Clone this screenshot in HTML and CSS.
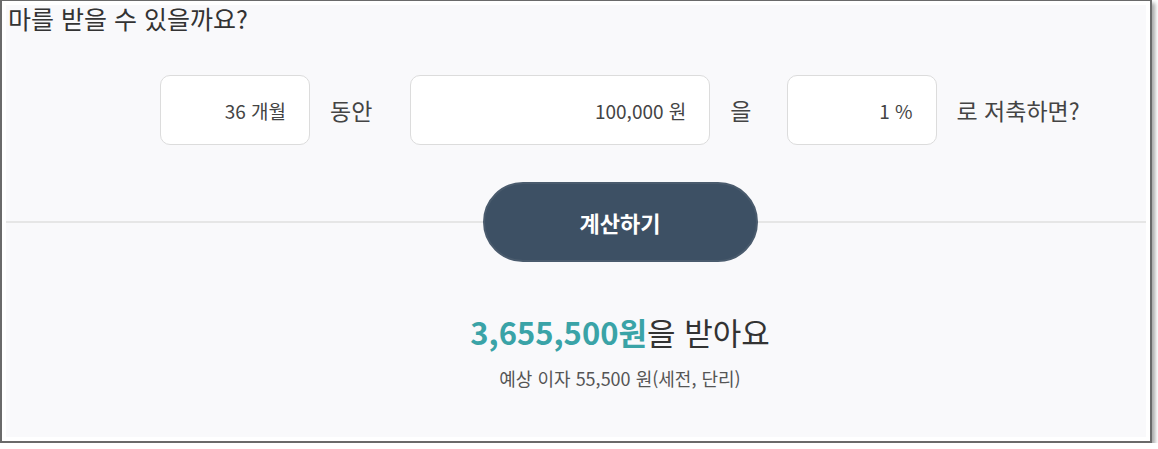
FILE: index.html
```html
<!DOCTYPE html>
<html lang="ko">
<head>
<meta charset="utf-8">
<link rel="stylesheet" href="styles.css">
</head>
<body>
<div class="frame">
  <div class="page">
    <h1 class="title">마를 받을 수 있을까요?</h1>
    <div class="row">
      <div class="field field-sm">36 개월</div>
      <span class="label">동안</span>
      <div class="field field-lg">100,000 원</div>
      <span class="label label-short">을</span>
      <div class="field field-sm">1 %</div>
      <span class="label label-last">로 저축하면?</span>
    </div>
    <div class="btn-row">
      <button class="btn">계산하기</button>
    </div>
    <div class="result">
      <p class="result-main"><strong class="amount">3,655,500원</strong>을 받아요</p>
      <p class="result-sub">예상 이자 55,500 원(세전, 단리)</p>
    </div>
  </div>
</div>
</body>
</html>
```

FILE: styles.css
```css
* { box-sizing: border-box; }

html, body {
  margin: 0;
  padding: 0;
  background: #ffffff;
}

body {
  font-family: "Noto Sans CJK KR", "Noto Sans", sans-serif;
  color: #333333;
}

.frame {
  width: 1152px;
  height: 443px;
  background: #ffffff;
  border: 2px solid #6a6a6a;
  border-top-width: 1px;
  padding: 4px;
  box-shadow: 3px 3px 4px rgba(0, 0, 0, 0.35);
}

.page {
  height: 100%;
  background: #f9f9fb;
}

.title {
  margin: 0;
  padding-left: 2px;
  font-size: 25px;
  line-height: 26px;
  font-weight: 400;
  color: #333333;
}

.row {
  display: flex;
  align-items: center;
  margin: 44px 0 0 154px;
  height: 70px;
}

.field {
  height: 70px;
  background: #ffffff;
  border: 1px solid #dcdcdc;
  border-radius: 10px;
  display: flex;
  align-items: center;
  justify-content: flex-end;
  padding-right: 23px;
  font-size: 19px;
  color: #444444;
  font-weight: 400;
}

.field-sm { width: 150px; }
.field-lg { width: 300px; }

.label {
  margin: 0 38px 0 20px;
  font-size: 23px;
  color: #444444;
}

.label-short { margin-right: 35px; }

.label-last { margin-right: 0; }

.btn-row {
  margin-top: 37px;
  display: flex;
  justify-content: center;
  padding: 0 66px 0 154px;
  background: linear-gradient(#e6e6e6, #e6e6e6) no-repeat center / 100% 2px;
}

.btn {
  width: 275px;
  height: 80px;
  border-radius: 40px;
  background: #3d5064;
  border: 2px solid #4a5b6d;
  color: #ffffff;
  font-family: inherit;
  font-size: 22px;
  font-weight: 700;
  padding: 0;
}

.result {
  padding: 0 66px 0 154px;
  text-align: center;
}

.result-main {
  margin: 50px 0 0 0;
  font-size: 31px;
  line-height: 40px;
  color: #333333;
}

.amount {
  color: #3aa3a7;
  font-weight: 700;
}

.result-sub {
  margin: 14px 0 0 0;
  font-size: 18px;
  line-height: 24px;
  color: #555555;
}
```
